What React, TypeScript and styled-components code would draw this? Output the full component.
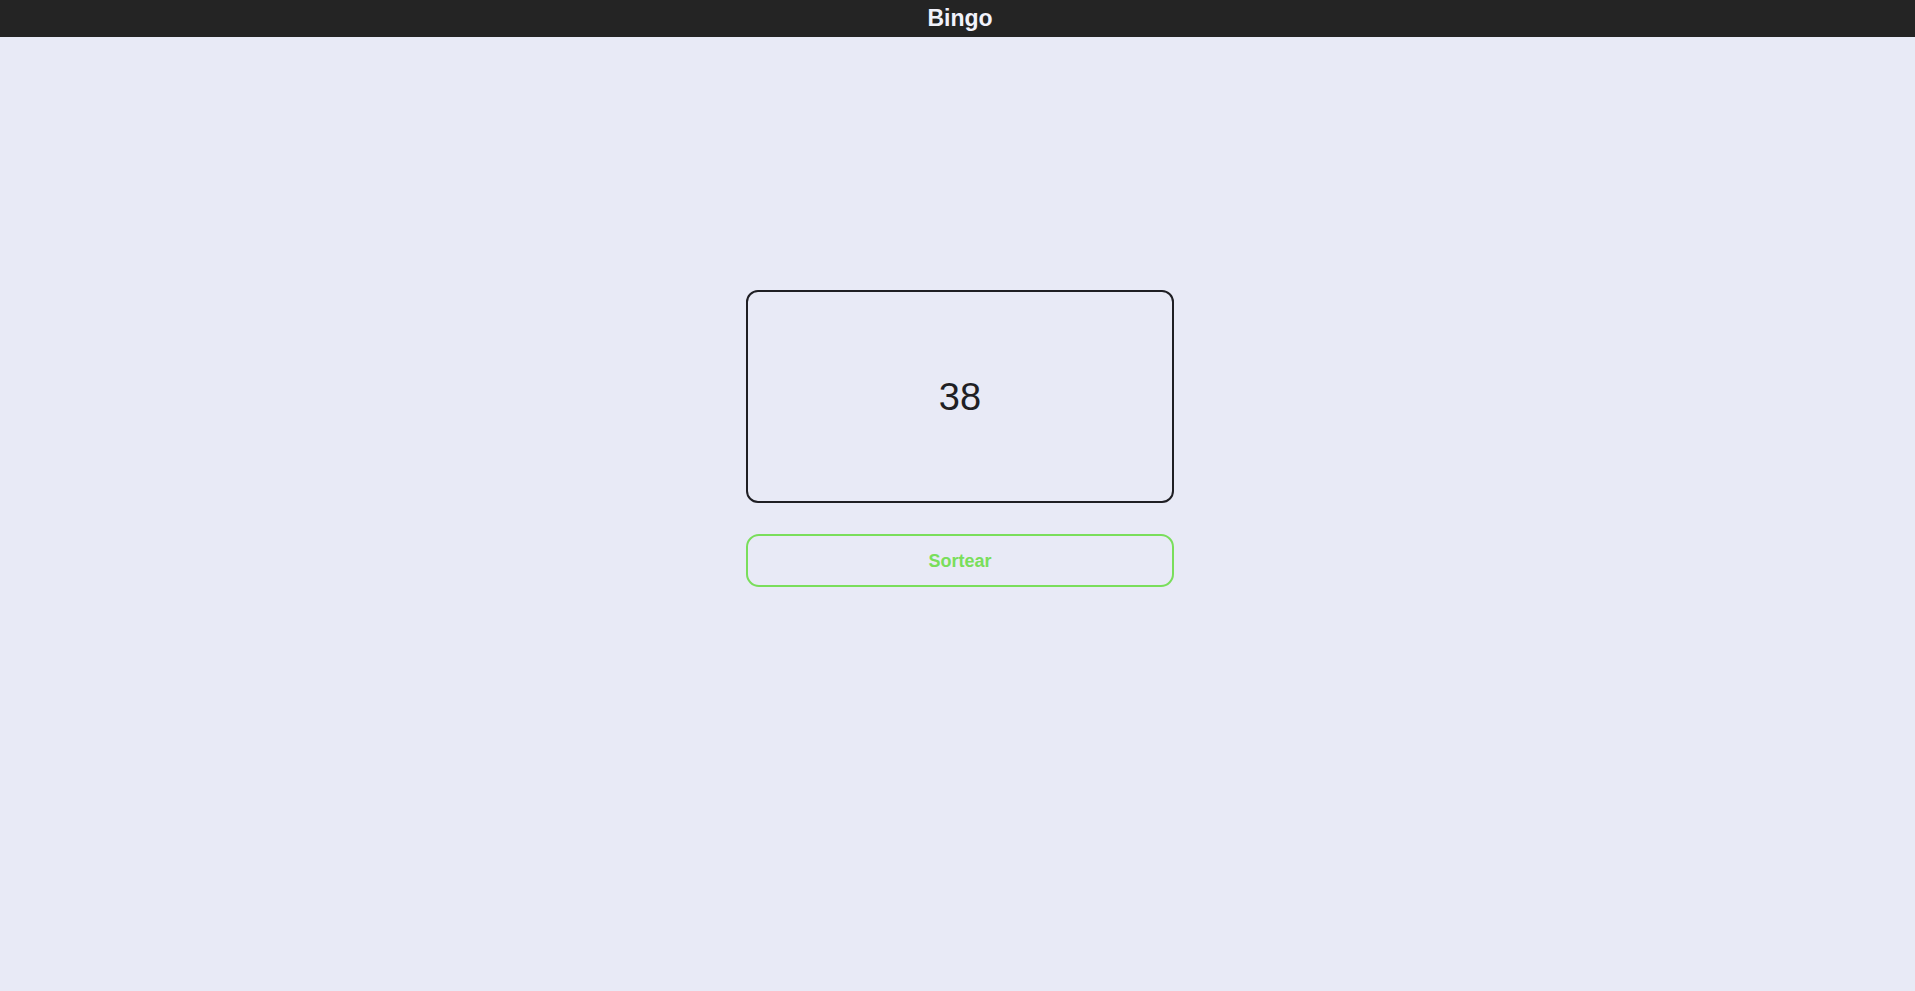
import React from "react";
import styled, { createGlobalStyle } from "styled-components";

const Global = createGlobalStyle`
  html, body { margin: 0; padding: 0; }
  body {
    background: #e8eaf6;
    font-family: "Liberation Sans", Arial, sans-serif;
    min-height: 100vh;
  }
`;

const Header = styled.header`
  height: 37px;
  background: #242424;
  color: #f1f2fb;
  display: flex;
  align-items: center;
  justify-content: center;
  padding-left: 5px;
  font-size: 23px;
  font-weight: 700;
`;

const Main = styled.main`
  display: flex;
  flex-direction: column;
  align-items: center;
  padding-top: 253px;
  padding-left: 5px;
  gap: 31px;
`;

const Display = styled.div`
  box-sizing: border-box;
  width: 428px;
  height: 213px;
  border: 2px solid #1f1f24;
  border-radius: 12px;
  display: flex;
  align-items: center;
  justify-content: center;
  padding-top: 2px;
  font-size: 38px;
  color: #1f1f24;
`;

const DrawButton = styled.button`
  box-sizing: border-box;
  width: 428px;
  height: 53px;
  border: 2px solid #79de5b;
  border-radius: 13px;
  background: transparent;
  color: #79de5b;
  font-family: "Liberation Sans", Arial, sans-serif;
  font-weight: 700;
  font-size: 18px;
  padding-top: 2px;
  cursor: pointer;
`;

export default function App() {
  const [num, setNum] = React.useState(38);
  return (
    <>
      <Global />
      <Header>Bingo</Header>
      <Main>
        <Display>{num}</Display>
        <DrawButton onClick={() => setNum(1 + Math.floor(Math.random() * 75))}>Sortear</DrawButton>
      </Main>
    </>
  );
}
